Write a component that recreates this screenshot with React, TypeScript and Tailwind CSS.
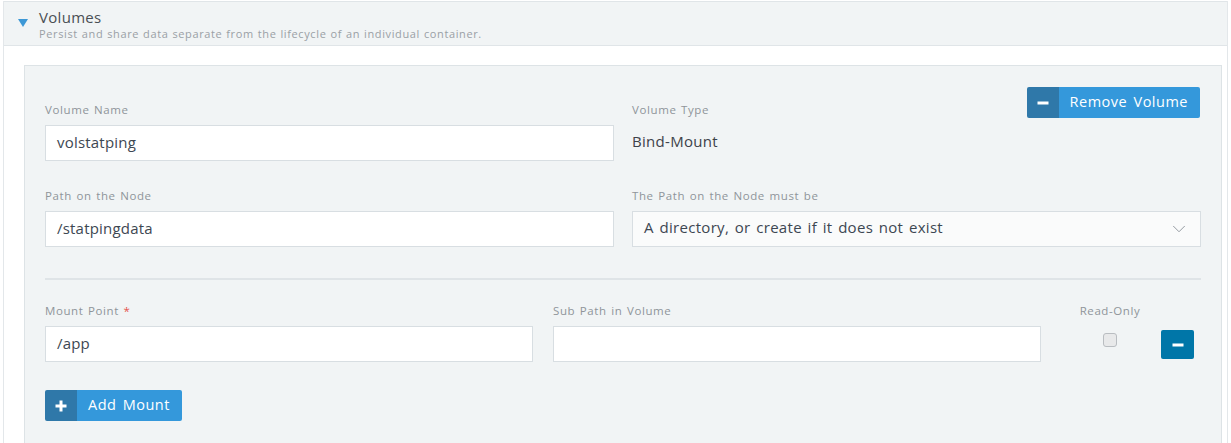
import { ChevronDown } from "lucide-react";

const font = { fontFamily: '"Open Sans", "Liberation Sans", sans-serif' };

function Label({ children }: { children: React.ReactNode }) {
  return (
    <div className="text-[11.5px] leading-4 text-[#8f959a] mb-[7px] h-4 tracking-[0.6px] [word-spacing:1px]">
      {children}
    </div>
  );
}

function TextInput({ value }: { value: string }) {
  return (
    <div className="h-[36px] bg-white border border-[#d8dee2] flex items-center px-[11px] pb-[2px] text-[15px] text-[#3d4752] tracking-[0.2px]">
      {value}
    </div>
  );
}

function IconButton({ icon, label }: { icon: "plus" | "minus"; label: string }) {
  return (
    <button type="button" className="flex h-[31px] rounded-[2px] overflow-hidden text-white text-[14.5px] tracking-[0.5px] [word-spacing:2px]">
      <span className="w-[32px] bg-[#2f78a9] flex items-center justify-center">
        {icon === "plus" ? (
          <svg width="12" height="12" viewBox="0 0 12 12">
            <rect x="4.5" y="0.5" width="3" height="11" fill="white" />
            <rect x="0.5" y="4.5" width="11" height="3" fill="white" />
          </svg>
        ) : (
          <svg width="12" height="12" viewBox="0 0 12 12">
            <rect x="0.5" y="4.5" width="11" height="3" fill="white" />
          </svg>
        )}
      </span>
      <span className="bg-[#3498db] flex items-center pl-[11px] pr-[12px] pb-px">{label}</span>
    </button>
  );
}

export default function App() {
  return (
    <div style={font} className="w-[1231px] h-[443px] bg-white overflow-hidden pl-[3px] pr-[3px]">
      <div className="border-x border-[#e3e7ea] h-full">
        {/* header */}
        <div className="bg-[#f1f4f5] border-y border-[#e0e5e8] h-[45px] mt-px flex items-start pl-[14px] pt-[6px]">
          <svg width="10" height="8" viewBox="0 0 10 8" className="mt-[11px] mr-[11px]">
            <polygon points="0,0 10,0 5,8" fill="#3d98d6" />
          </svg>
          <div>
            <div className="text-[15px] leading-[18px] text-[#4a4f54] tracking-[0.3px]">Volumes</div>
            <div className="text-[11px] leading-[16px] text-[#9aa0a5] tracking-[0.62px] [word-spacing:0.5px]">
              Persist and share data separate from the lifecycle of an individual container.
            </div>
          </div>
        </div>

        {/* panel */}
        <div className="mt-[19px] ml-[20px] mr-[5px] bg-[#f1f4f5] border border-[#dde3e6] h-[400px] px-[20px] pt-[20px]">
          <div className="flex">
            <div className="flex-1 pr-[17px] pt-[16px]">
              <Label>Volume Name</Label>
              <TextInput value="volstatping" />
              <div className="mt-[27px]">
                <Label>Path on the Node</Label>
                <TextInput value="/statpingdata" />
              </div>
            </div>
            <div className="flex-1 pl-px">
              <div className="flex justify-between">
                <div className="pt-[16px]">
                  <Label>Volume Type</Label>
                  <div className="text-[15px] text-[#3d4249] h-[36px] leading-[33px] tracking-[0.3px]">Bind-Mount</div>
                </div>
                <div className="mt-px mr-px">
                  <IconButton icon="minus" label="Remove Volume" />
                </div>
              </div>
              <div className="mt-[27px]">
                <Label>The Path on the Node must be</Label>
                <div className="h-[36px] bg-[#fafbfb] border border-[#d8dee2] flex items-center justify-between pl-[11px] pr-[10px] text-[15px] text-[#3d4752] tracking-[0.3px] [word-spacing:1.5px]">
                  <span className="pb-[3px]">A directory, or create if it does not exist</span>
                  <ChevronDown size={22} strokeWidth={1} className="text-[#8b9299]" />
                </div>
              </div>
            </div>
          </div>

          <div className="h-[2px] bg-[#dfe4e7] mt-[31px]" />

          <div className="flex mt-[23px] items-start">
            <div className="w-[488px]">
              <Label>
                Mount Point <span className="text-[#e5554f]">*</span>
              </Label>
              <TextInput value="/app" />
            </div>
            <div className="w-[488px] ml-[20px]">
              <Label>Sub Path in Volume</Label>
              <TextInput value="" />
            </div>
            <div className="w-[100px] ml-[19px] flex flex-col items-center">
              <Label>Read-Only</Label>
              <div className="w-[14px] h-[14px] mt-[7px] rounded-[3px] border border-[#b9bdc1] bg-[#e8e9ea]" />
            </div>
            <button type="button" className="ml-px mt-[27px] w-[33px] h-[29px] rounded-[2px] bg-[#0076a8] flex items-center justify-center">
              <svg width="12" height="12" viewBox="0 0 12 12">
                <rect x="0.5" y="4.5" width="11" height="3" fill="white" />
              </svg>
            </button>
          </div>

          <div className="mt-[28px]">
            <IconButton icon="plus" label="Add Mount" />
          </div>
        </div>
      </div>
    </div>
  );
}
